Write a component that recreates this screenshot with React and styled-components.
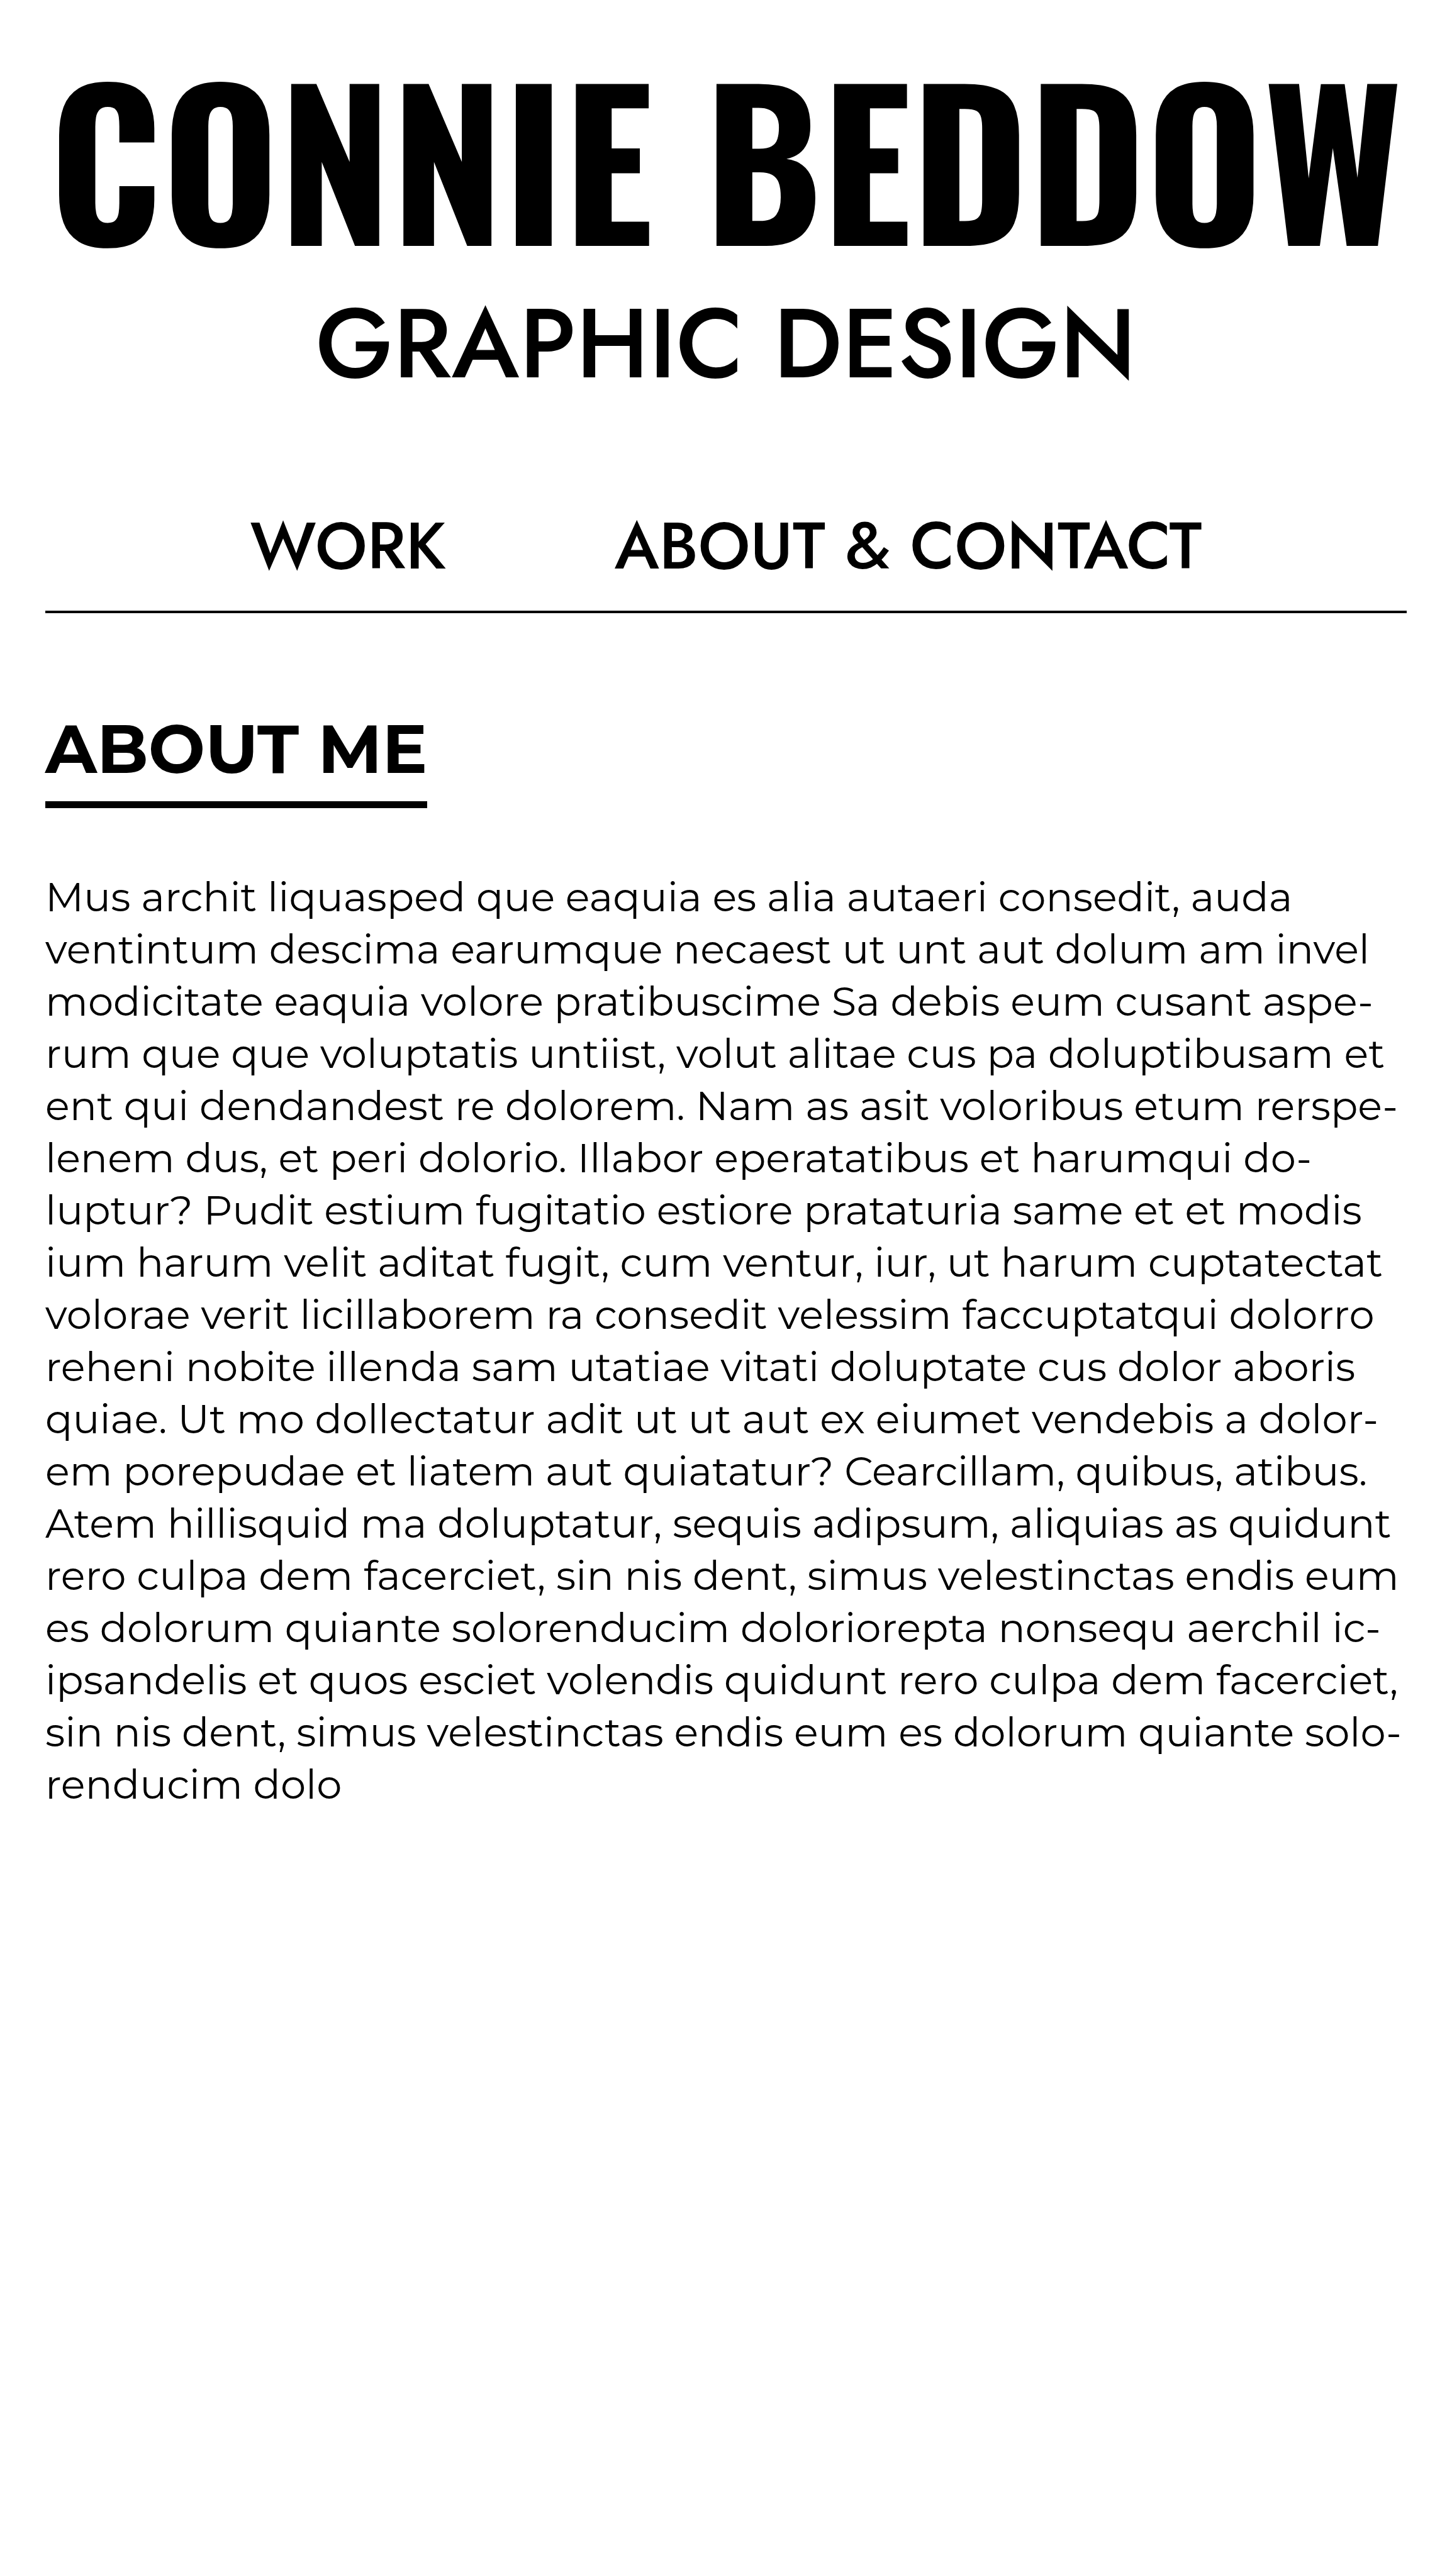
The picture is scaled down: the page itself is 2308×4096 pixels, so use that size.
import React from "react";
import styled, { createGlobalStyle } from "styled-components";

const display = `Oswald, "Open Sans Condensed", "Roboto Condensed", Roboto, sans-serif`;
const geometric = `Jost, Lato, sans-serif`;
const body = `Montserrat, Inter, sans-serif`;

const GlobalStyle = createGlobalStyle`
  body {
    margin: 0;
    background: #fff;
    color: #000;
  }
`;

const Page = styled.div`
  box-sizing: border-box;
  min-height: 100vh;
  padding: 88px 72px;
`;

const Masthead = styled.header`
  display: flex;
  flex-direction: column;
  align-items: stretch;
  text-align: center;
`;

const Name = styled.h1`
  margin: 0;
  font: 700 318px/320px ${display};
  white-space: nowrap;
  align-self: center;
`;

const Discipline = styled.p`
  margin: 58px 0 0;
  font: 500 156px/160px ${geometric};
`;

const Nav = styled.nav`
  display: flex;
  justify-content: center;
  gap: 268px;
  margin-top: 191px;
  padding-bottom: 50px;
  border-bottom: 4px solid #000;
`;

const NavLink = styled.a`
  color: inherit;
  font: 500 103px/104px ${geometric};
  text-decoration: none;
  white-space: nowrap;
`;

const Section = styled.section`
  display: flex;
  flex-direction: column;
  align-items: flex-start;
  gap: 100px;
  margin-top: 162px;
`;

const Heading = styled.h2`
  margin: 0;
  padding-bottom: 29px;
  border-bottom: 11px solid #000;
  font: 700 107px/108px ${body};
`;

const Copy = styled.p`
  margin: 0;
  font: 400 64px/83px ${body};
`;

const Line = styled.span`
  display: block;
  white-space: nowrap;
`;

const about = [
  "Mus archit liquasped que eaquia es alia autaeri consedit, auda",
  "ventintum descima earumque necaest ut unt aut dolum am invel",
  "modicitate eaquia volore pratibuscime Sa debis eum cusant aspe-",
  "rum que que voluptatis untiist, volut alitae cus pa doluptibusam et",
  "ent qui dendandest re dolorem. Nam as asit voloribus etum rerspe-",
  "lenem dus, et peri dolorio. Illabor eperatatibus et harumqui do-",
  "luptur? Pudit estium fugitatio estiore prataturia same et et modis",
  "ium harum velit aditat fugit, cum ventur, iur, ut harum cuptatectat",
  "volorae verit licillaborem ra consedit velessim faccuptatqui dolorro",
  "reheni nobite illenda sam utatiae vitati doluptate cus dolor aboris",
  "quiae. Ut mo dollectatur adit ut ut aut ex eiumet vendebis a dolor-",
  "em porepudae et liatem aut quiatatur? Cearcillam, quibus, atibus.",
  "Atem hillisquid ma doluptatur, sequis adipsum, aliquias as quidunt",
  "rero culpa dem facerciet, sin nis dent, simus velestinctas endis eum",
  "es dolorum quiante solorenducim doloriorepta nonsequ aerchil ic-",
  "ipsandelis et quos esciet volendis quidunt rero culpa dem facerciet,",
  "sin nis dent, simus velestinctas endis eum es dolorum quiante solo-",
  "renducim dolo",
];

export default function App() {
  return (
    <>
      <GlobalStyle />
      <Page>
        <Masthead>
          <Name>CONNIE BEDDOW</Name>
          <Discipline>GRAPHIC DESIGN</Discipline>
          <Nav aria-label="Main">
            <NavLink href="#work">WORK</NavLink>
            <NavLink href="#about">ABOUT &amp; CONTACT</NavLink>
          </Nav>
        </Masthead>
        <main>
          <Section id="about">
            <Heading>ABOUT ME</Heading>
            <Copy>
              {about.map((line) => (
                <Line key={line}>{line} </Line>
              ))}
            </Copy>
          </Section>
        </main>
      </Page>
    </>
  );
}
